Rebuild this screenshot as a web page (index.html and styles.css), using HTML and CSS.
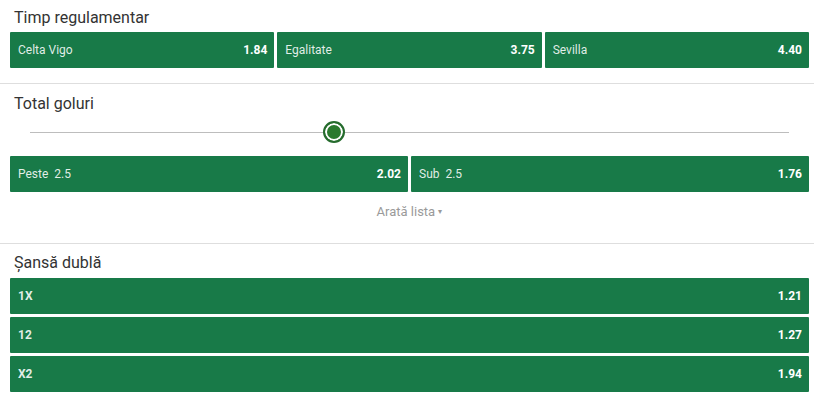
FILE: index.html
```html
<!DOCTYPE html>
<html lang="ro">
<head>
    <meta charset="UTF-8">
    <meta name="viewport" content="width=device-width, initial-scale=1.0">
    <title>Pariuri</title>
    <link rel="stylesheet" href="styles.css">
</head>
<body>

<!-- timp regulamentar -->
<div class="market">
    <h2 class="market-title">Timp regulamentar</h2>
    <div class="odds-row cols-3">
        <button type="button" class="odd"><span class="odd-label">Celta Vigo</span><span class="odd-value">1.84</span></button>
        <button type="button" class="odd"><span class="odd-label">Egalitate</span><span class="odd-value">3.75</span></button>
        <button type="button" class="odd"><span class="odd-label">Sevilla</span><span class="odd-value">4.40</span></button>
    </div>
</div>

<!-- total goluri -->
<div class="market">
    <h2 class="market-title">Total goluri</h2>
    <div class="slider">
        <div class="slider-track"></div>
        <div class="slider-thumb" style="left: 40%;"></div>
    </div>
    <div class="odds-row cols-2">
        <button type="button" class="odd"><span class="odd-label">Peste&nbsp; 2.5</span><span class="odd-value">2.02</span></button>
        <button type="button" class="odd"><span class="odd-label">Sub&nbsp; 2.5</span><span class="odd-value">1.76</span></button>
    </div>
    <div class="show-list">Arată lista <span class="caret">&#9662;</span></div>
</div>

<!-- sansa dubla -->
<div class="market last">
    <h2 class="market-title">Șansă dublă</h2>
    <div class="odds-list">
        <button type="button" class="odd"><span class="odd-label strong">1X</span><span class="odd-value">1.21</span></button>
        <button type="button" class="odd"><span class="odd-label strong">12</span><span class="odd-value">1.27</span></button>
        <button type="button" class="odd"><span class="odd-label strong">X2</span><span class="odd-value">1.94</span></button>
    </div>
</div>

</body>
</html>
```

FILE: styles.css
```css
* {
  box-sizing: border-box;
}

body {
  margin: 0;
  background: #fff;
  font-family: Roboto, "Liberation Sans", Arial, sans-serif;
  color: #333;
}

/* one block per market */
.market {
  padding: 10px 5px 16px 10px;
  border-bottom: 1px solid #dedede;
}

.market:first-child {
  padding-top: 8px;
  padding-bottom: 15px;
}

.market.last {
  border-bottom: none;
  padding-top: 9px;
  padding-bottom: 0;
}

.market-title {
  margin: 0 0 4px 4px;
  font-size: 16px;
  line-height: 20px;
  font-weight: 400;
  color: #333;
}

.market.last .market-title {
  margin-bottom: 5px;
}

.odds-row {
  display: grid;
  gap: 3px;
}

.cols-3 {
  grid-template-columns: 1fr 1fr 1fr;
}

.cols-2 {
  grid-template-columns: 1fr 1fr;
}

.odds-list {
  display: flex;
  flex-direction: column;
  gap: 3px;
}

.odd {
  display: flex;
  align-items: center;
  justify-content: space-between;
  height: 36px;
  padding: 0 7px 0 8px;
  border: none;
  border-radius: 1px;
  background: #187a48;
  font-family: inherit;
  font-size: 12px;
  cursor: pointer;
}

.odd-label {
  color: rgba(255, 255, 255, 0.88);
}

.odd-label.strong {
  font-weight: 700;
}

.odd-value {
  color: #fff;
  font-weight: 700;
}

/* goal line slider */
.slider {
  position: relative;
  height: 22px;
  margin: 7px 20px 13px 20px;
}

.slider-track {
  position: absolute;
  left: 0;
  right: 0;
  top: 11px;
  height: 1px;
  background: #bdbdbd;
}

.slider-thumb {
  position: absolute;
  top: 0;
  width: 22px;
  height: 22px;
  margin-left: -11px;
  border-radius: 50%;
  border: 2px solid #256b2d;
  background: #2a7a2e;
  box-shadow: inset 0 0 0 2px #fff;
}

.show-list {
  margin-top: 12px;
  padding-bottom: 7px;
  text-align: center;
  font-size: 13px;
  line-height: 16px;
  color: #9a9a9a;
}

.caret {
  font-size: 8px;
  vertical-align: 2px;
}
```
